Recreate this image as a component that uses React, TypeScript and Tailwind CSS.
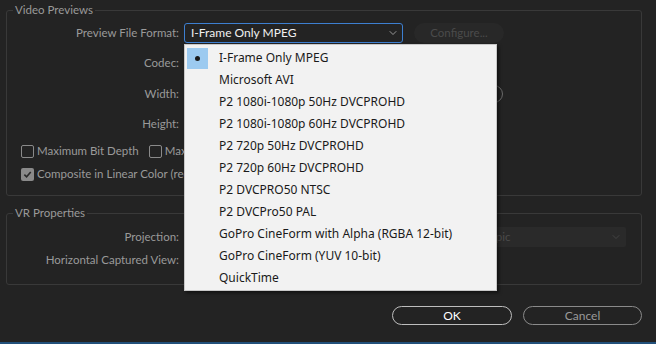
import { ChevronDown } from "lucide-react";

const formats = [
  "I-Frame Only MPEG",
  "Microsoft AVI",
  "P2 1080i-1080p 50Hz DVCPROHD",
  "P2 1080i-1080p 60Hz DVCPROHD",
  "P2 720p 50Hz DVCPROHD",
  "P2 720p 60Hz DVCPROHD",
  "P2 DVCPRO50 NTSC",
  "P2 DVCPro50 PAL",
  "GoPro CineForm with Alpha (RGBA 12-bit)",
  "GoPro CineForm (YUV 10-bit)",
  "QuickTime",
];

function Label({ children }: { children: React.ReactNode }) {
  return (
    <div className="w-[177px] shrink-0 text-right text-[11.5px] text-[#9a9a9a] pr-[5px]">
      {children}
    </div>
  );
}

function Check({ checked, label }: { checked?: boolean; label: string }) {
  return (
    <div className="flex items-center gap-[3px] whitespace-nowrap text-[11.5px] text-[#9a9a9a]">
      {checked ? (
        <span className="w-[13px] h-[13px] shrink-0 rounded-[2px] bg-[#8a8a8a] flex items-center justify-center">
          <svg width="9" height="9" viewBox="0 0 10 10">
            <path d="M1.5 5.2 L4 7.6 L8.6 2.2" stroke="#2a2a2a" strokeWidth="1.8" fill="none" />
          </svg>
        </span>
      ) : (
        <span className="w-[13px] h-[13px] shrink-0 rounded-[2px] border border-[#8a8a8a]" />
      )}
      {label}
    </div>
  );
}

export default function App() {
  return (
    <div
      className="w-[656px] h-[344px] bg-[#232323] relative overflow-hidden flex flex-col px-[6px] pt-[2px]"
      style={{ fontFamily: "Lato, 'Noto Sans', sans-serif" }}
    >
      <fieldset className="border border-[#393939] rounded-[3px] w-[636px] pb-[13px]">
        <legend className="ml-[6px] px-[2px] h-[16px] leading-[16px] text-[11.5px] text-[#9a9a9a]">
          Video Previews
        </legend>
        <div className="flex flex-col pt-[5px]">
          <div className="flex items-center h-[20px]">
            <Label>Preview File Format:</Label>
            <div className="w-[219px] h-[20px] border border-[#3d7fd0] rounded-[3px] flex items-center justify-between pl-[6px] pr-[3px] text-[12px] text-[#f0f0f0]">
              I-Frame Only MPEG
              <ChevronDown size={12} strokeWidth={1.5} className="text-[#bbbbbb]" />
            </div>
            <div className="ml-[11px] w-[90px] h-[20px] rounded-full bg-[#282828] text-[11.5px] text-[#4b4b4b] flex items-center justify-center">
              Configure...
            </div>
          </div>
          <div className="flex items-center h-[20px] mt-[10px]">
            <Label>Codec:</Label>
          </div>
          <div className="flex items-center h-[20px] mt-[11px]">
            <Label>Width:</Label>
            <div className="ml-[297px] w-[22px] h-[18px] rounded-full border border-[#6a6a6a]" />
          </div>
          <div className="flex items-center h-[20px] mt-[10px]">
            <Label>Height:</Label>
          </div>
          <div className="flex items-center gap-[10px] h-[16px] mt-[9px] pl-[14px] w-[177px] overflow-hidden">
            <Check label="Maximum Bit Depth" />
            <Check label="Maximize Render Quality" />
          </div>
          <div className="flex items-center h-[16px] mt-[7px] pl-[14px] w-[177px] overflow-hidden">
            <Check checked label="Composite in Linear Color (requires GPU acceleration or max render quality)" />
          </div>
        </div>
      </fieldset>

      <fieldset className="border border-[#393939] rounded-[3px] w-[636px] mt-[9px] pb-[14px]">
        <legend className="ml-[6px] px-[2px] h-[16px] leading-[16px] text-[11.5px] text-[#9a9a9a]">
          VR Properties
        </legend>
        <div className="flex flex-col pt-[6px]">
          <div className="flex items-center h-[20px]">
            <Label>Projection:</Label>
            <div className="w-[120px] h-[20px] rounded-[2px] bg-[#2a2a2a]" />
            <div className="ml-[137px] w-[185px] h-[20px] rounded-[2px] bg-[#2a2a2a] flex items-center justify-between pl-[8px] pr-[4px] text-[11.5px] text-[#4b4b4b]">
              Monoscopic
              <ChevronDown size={12} strokeWidth={1.5} className="text-[#4b4b4b]" />
            </div>
          </div>
          <div className="flex items-center h-[20px] mt-[3px]">
            <Label>Horizontal Captured View:</Label>
          </div>
        </div>
      </fieldset>

      <div className="flex justify-end gap-[11px] mt-[21px] w-[636px]">
        <button className="w-[120px] h-[19px] rounded-full border border-[#bdbdbd] text-[12px] text-white leading-none">
          OK
        </button>
        <button className="w-[119px] h-[19px] rounded-full border border-[#8a8a8a] text-[12px] text-[#9a9a9a] leading-none">
          Cancel
        </button>
      </div>

      <div className="mt-auto -mx-[6px] h-[2px] bg-[#22507a]" />

      <div
        className="absolute left-[184px] top-[44px] w-[313px] h-[247px] bg-[#f2f2f2] border border-[#c8c8c8] shadow-[2px_2px_3px_rgba(0,0,0,0.5)] pt-[2px] pl-[2px]"
        style={{ fontFamily: "'Noto Sans', sans-serif" }}
      >
        {formats.map((f, i) => (
          <div key={f} className="flex items-center h-[22px] text-[12px] text-[#1a1a1a]">
            <div
              className={
                i === 0
                  ? "w-[21px] h-[21px] bg-[#9ccaf0] flex items-center justify-center"
                  : "w-[21px] h-[21px]"
              }
            >
              {i === 0 && <span className="w-[5px] h-[5px] rounded-full bg-[#1a1a1a]" />}
            </div>
            <span className="ml-[11px] whitespace-nowrap">{f}</span>
          </div>
        ))}
      </div>
    </div>
  );
}
